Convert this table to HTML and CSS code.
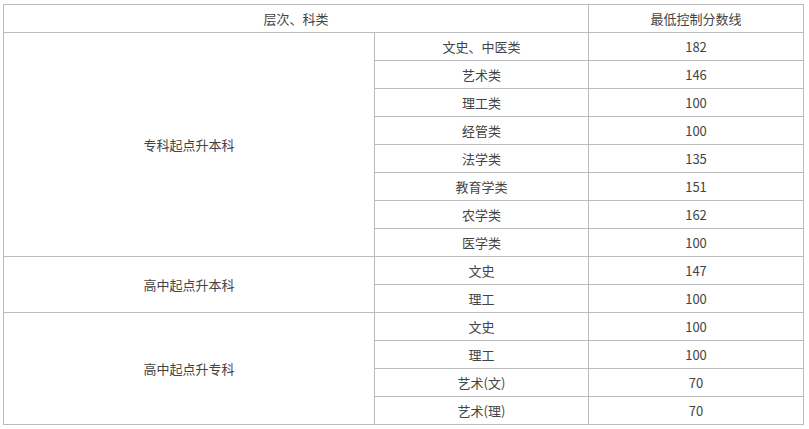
FILE: index.html
```html
<!DOCTYPE html>
<html lang="zh">
<head>
<meta charset="utf-8">
<link rel="stylesheet" href="styles.css">
</head>
<body>
<table class="score-table">
  <colgroup>
    <col class="c1">
    <col class="c2">
    <col class="c3">
  </colgroup>
  <thead>
    <tr><th colspan="2">层次、科类</th><th>最低控制分数线</th></tr>
  </thead>
  <tbody>
    <tr><td rowspan="8">专科起点升本科</td><td>文史、中医类</td><td>182</td></tr>
    <tr><td>艺术类</td><td>146</td></tr>
    <tr><td>理工类</td><td>100</td></tr>
    <tr><td>经管类</td><td>100</td></tr>
    <tr><td>法学类</td><td>135</td></tr>
    <tr><td>教育学类</td><td>151</td></tr>
    <tr><td>农学类</td><td>162</td></tr>
    <tr><td>医学类</td><td>100</td></tr>
    <tr><td rowspan="2">高中起点升本科</td><td>文史</td><td>147</td></tr>
    <tr><td>理工</td><td>100</td></tr>
    <tr><td rowspan="4">高中起点升专科</td><td>文史</td><td>100</td></tr>
    <tr><td>理工</td><td>100</td></tr>
    <tr><td>艺术(文)</td><td>70</td></tr>
    <tr><td>艺术(理)</td><td>70</td></tr>
  </tbody>
</table>
</body>
</html>
```
FILE: styles.css
```css
html, body {
  margin: 0;
  padding: 0;
  background: #fff;
}
body {
  padding: 4px 0 0 3px;
  font-family: "Noto Sans CJK SC", "Noto Sans", sans-serif;
  font-size: 13px;
  color: #444;
}
.score-table {
  border-collapse: collapse;
  table-layout: fixed;
  width: 800px;
}
.c1 { width: 371px; }
.c2 { width: 214px; }
.c3 { width: 215px; }
.score-table th,
.score-table td {
  border: 1px solid #bbb;
  padding: 0;
  height: 27px;
  line-height: 27px;
  text-align: center;
  vertical-align: middle;
  font-weight: normal;
  white-space: nowrap;
}
```
